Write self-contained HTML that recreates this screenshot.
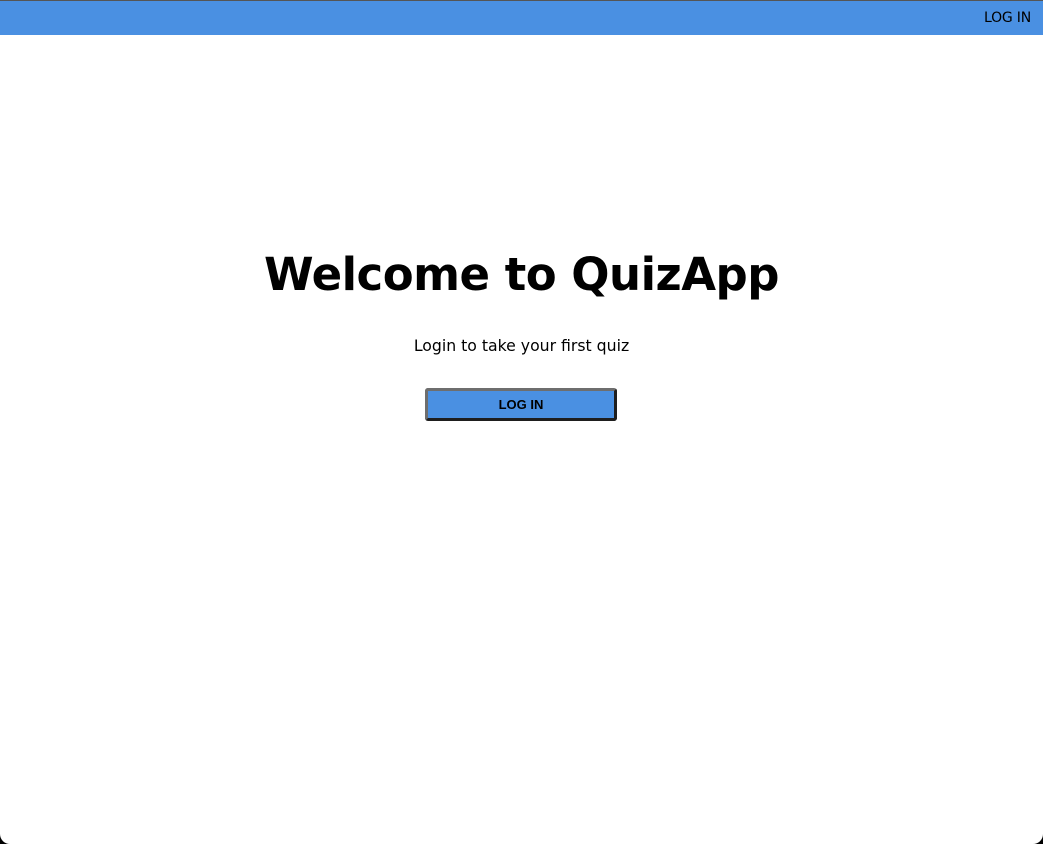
<!DOCTYPE html>
<html><head><style>
html,body{margin:0;padding:0;width:1043px;height:844px;overflow:hidden;background:#000;}
.page{position:absolute;left:0;top:0;width:1043px;height:844px;background:#fff;border-radius:0 0 10px 10px;overflow:hidden;font-family:"DejaVu Sans","Liberation Sans",sans-serif;}
.topline{position:absolute;left:0;top:0;width:1043px;height:1px;background:#555;}
.bar{position:absolute;left:0;top:1px;width:1043px;height:34px;background:#4a90e2;}
.bar span{position:absolute;right:12px;top:9px;font-size:14px;letter-spacing:-0.2px;color:#000;}
h1{position:absolute;left:0;width:1043px;top:248px;margin:0;text-align:center;font-size:45px;font-weight:bold;color:#000;letter-spacing:-0.5px;}
p{position:absolute;left:0;width:1043px;top:336px;margin:0;text-align:center;font-size:15.7px;color:#000;}
.btn{position:absolute;left:425px;top:388px;width:186px;height:27px;background:#4a90e2;border:3px solid;border-color:#6e6e6e #1e1e1e #1e1e1e #6e6e6e;border-radius:3px;font-family:"Liberation Sans",sans-serif;font-weight:bold;font-size:13px;text-align:center;line-height:27px;color:#000;}
</style></head><body><div class="page">
<div class="topline"></div>
<div class="bar"><span>LOG IN</span></div>
<h1>Welcome to QuizApp</h1>
<p>Login to take your first quiz</p>
<div class="btn">LOG IN</div>
</div></body></html>
